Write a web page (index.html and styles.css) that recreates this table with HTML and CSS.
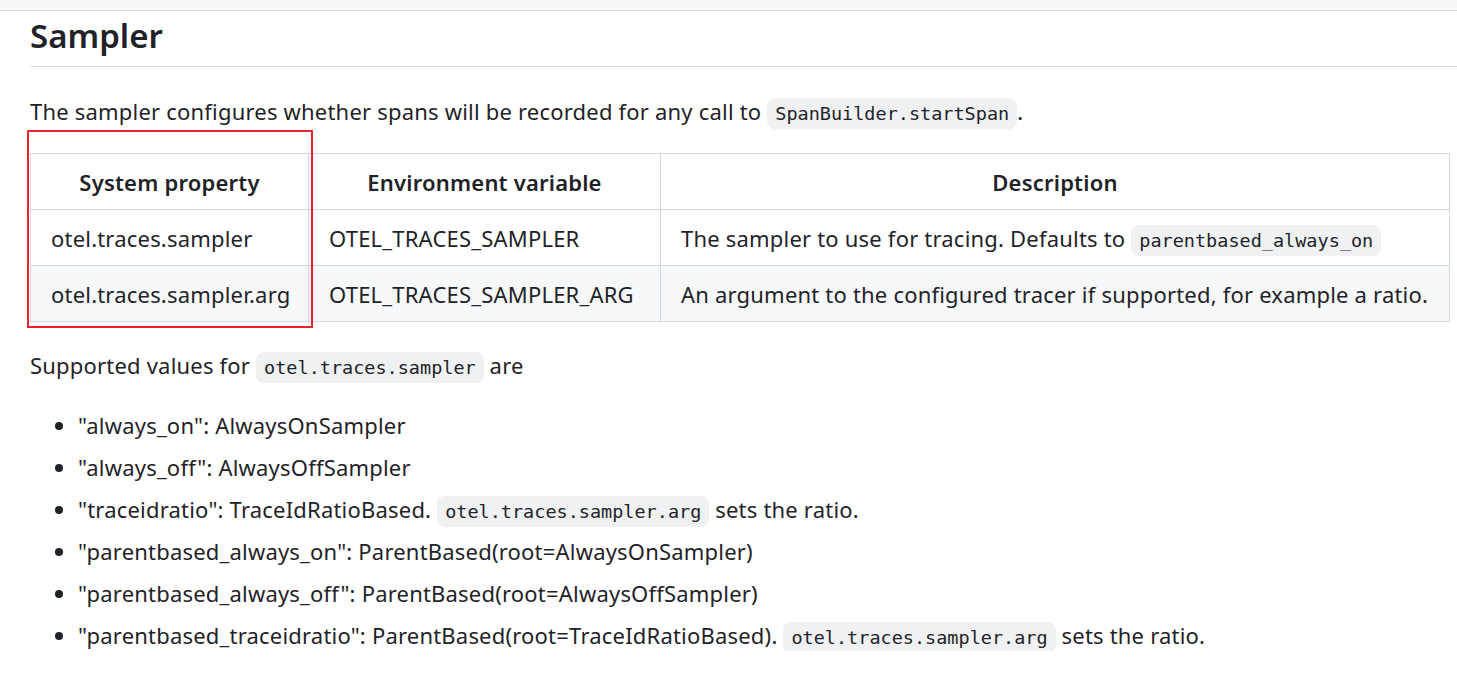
FILE: index.html
```html
<!DOCTYPE html>
<html lang="en">
<head>
<meta charset="utf-8">
<title>Sampler</title>
<link rel="stylesheet" href="styles.css">
</head>
<body>
<div class="topbar"></div>
<article class="markdown">
  <h2 class="title">Sampler</h2>
  <p class="intro">The sampler configures whether spans will be recorded for any call to <code>SpanBuilder.startSpan</code>.</p>
  <div class="table-wrap">
    <table class="props">
      <colgroup>
        <col class="c1">
        <col class="c2">
        <col class="c3">
      </colgroup>
      <thead>
        <tr>
          <th>System property</th>
          <th>Environment variable</th>
          <th>Description</th>
        </tr>
      </thead>
      <tbody>
        <tr>
          <td>otel.traces.sampler</td>
          <td>OTEL_TRACES_SAMPLER</td>
          <td>The sampler to use for tracing. Defaults to <code>parentbased_always_on</code></td>
        </tr>
        <tr class="alt">
          <td>otel.traces.sampler.arg</td>
          <td>OTEL_TRACES_SAMPLER_ARG</td>
          <td>An argument to the configured tracer if supported, for example a ratio.</td>
        </tr>
      </tbody>
    </table>
    <div class="highlight"></div>
  </div>
  <p class="supported">Supported values for <code>otel.traces.sampler</code> are</p>
  <ul class="values">
    <li>"always_on": AlwaysOnSampler</li>
    <li>"always_off": AlwaysOffSampler</li>
    <li>"traceidratio": TraceIdRatioBased. <code>otel.traces.sampler.arg</code> sets the ratio.</li>
    <li>"parentbased_always_on": ParentBased(root=AlwaysOnSampler)</li>
    <li>"parentbased_always_off": ParentBased(root=AlwaysOffSampler)</li>
    <li>"parentbased_traceidratio": ParentBased(root=TraceIdRatioBased). <code>otel.traces.sampler.arg</code> sets the ratio.</li>
  </ul>
</article>
</body>
</html>
```
FILE: styles.css
```css
html, body {
  margin: 0;
  padding: 0;
  background: #ffffff;
}
body {
  font-family: "Noto Sans", "Open Sans", "Liberation Sans", sans-serif;
  font-size: 22px;
  letter-spacing: 0.2px;
  line-height: 32px;
  color: #1f2328;
}
.topbar {
  height: 10px;
  background: #f6f8fa;
  border-bottom: 1px solid #d0d7de;
}
.markdown {
  padding: 0 0 0 30px;
}
.title {
  margin: 5px 0 0 0;
  font-size: 33px;
  line-height: 40px;
  letter-spacing: 0;
  font-weight: 600;
  padding-bottom: 10px;
  border-bottom: 1px solid #d8dee4;
}
.intro {
  margin: 28px 0 0 0;
}
code {
  font-family: "DejaVu Sans Mono", "Liberation Mono", monospace;
  font-size: 18.5px;
  letter-spacing: 0;
  line-height: 20px;
  background: #eff1f3;
  border-radius: 8px;
  padding: 5px 8px;
}
.table-wrap {
  position: relative;
  margin-top: 26px;
}
.props {
  border-collapse: collapse;
  table-layout: fixed;
  width: 1419px;
}
.props col.c1 { width: 278px; }
.props col.c2 { width: 352px; }
.props col.c3 { width: 789px; }
.props th, .props td {
  border: 1px solid #d0d7de;
  padding: 0 20px;
  height: 55px;
  text-align: left;
  white-space: nowrap;
}
.props th {
  font-weight: 600;
  text-align: center;
}
.props tr.alt td {
  background: #f6f8fa;
}
.highlight {
  position: absolute;
  left: -3px;
  top: -23px;
  width: 282px;
  height: 194px;
  border: 2px solid #e8232d;
  pointer-events: none;
}
.supported {
  margin: 27px 0 0 0;
}
.values {
  margin: 28px 0 0 0;
  padding-left: 48px;
}
.values li {
  margin-top: 10px;
}
.values li:first-child {
  margin-top: 0;
}
```
